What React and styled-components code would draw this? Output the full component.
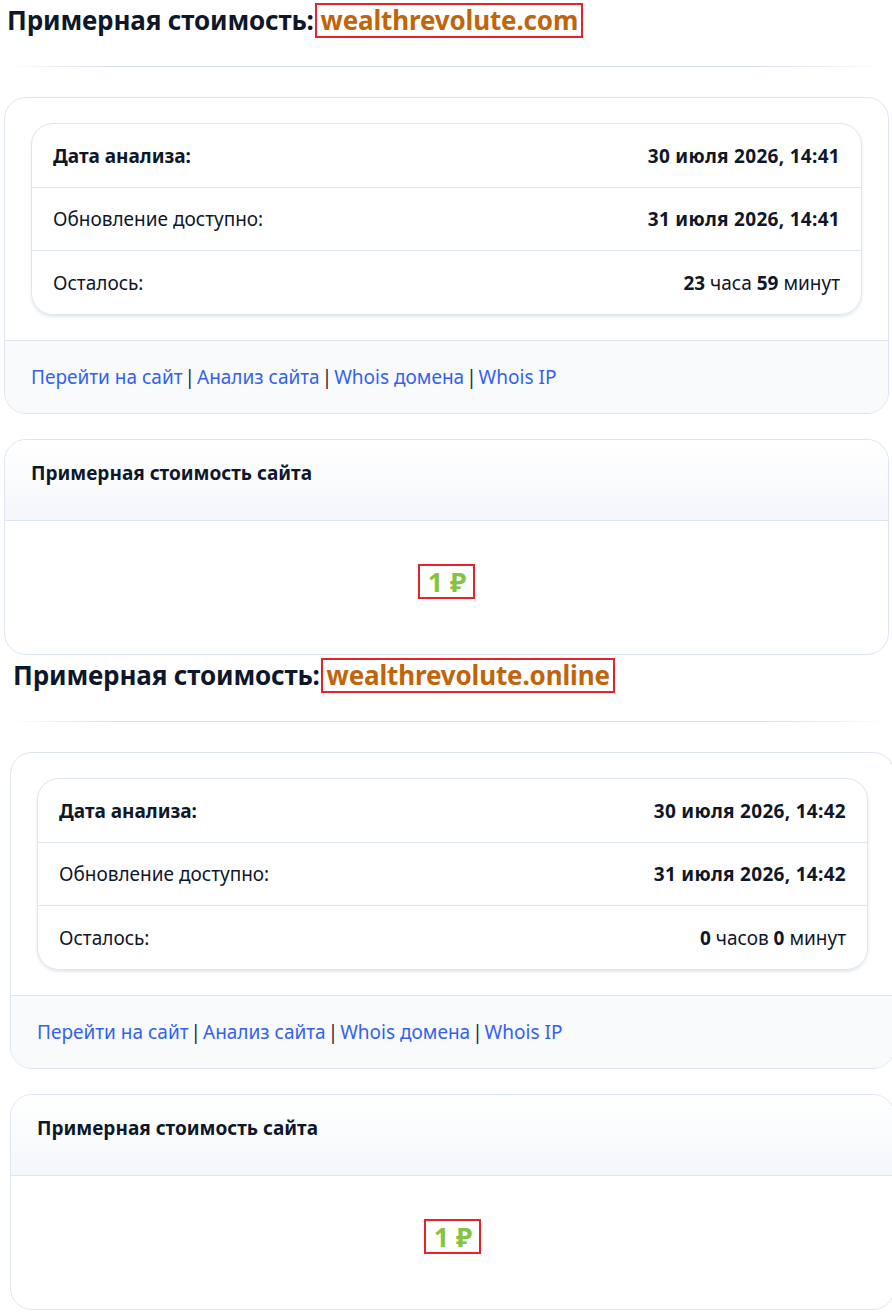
import React from "react";
import styled, { createGlobalStyle } from "styled-components";

const GlobalStyle = createGlobalStyle`
  html, body { margin: 0; padding: 0; background: #ffffff; overflow-x: hidden; }
  body { font-family: "Noto Sans", "Open Sans", Arial, sans-serif; color: #0f172a; }
  * { box-sizing: border-box; }
`;

const Page = styled.div`
  width: 892px;
  overflow: hidden;
`;

const Report = styled.section`
  width: 885px;
  margin-left: ${(p) => p.$shift}px;
  padding-top: 3px;
`;

const Heading = styled.h1`
  margin: 0 0 0 3px;
  font-size: 26px;
  font-weight: 700;
  line-height: 35px;
  letter-spacing: -0.15px;
  color: #0f172a;
  display: flex;
  align-items: center;
  gap: 1px;
  white-space: nowrap;
`;

const Domain = styled.span`
  display: inline-block;
  border: 2px solid #e3242b;
  padding: 0 3px 0 4px;
  line-height: 31px;
  color: #c0650b;
`;

const Rule = styled.hr`
  margin: 28px 0 30px;
  border: 0;
  height: 1px;
  background: linear-gradient(90deg, rgba(219,227,239,0), #d6deea 12%, #d6deea 85%, rgba(219,227,239,0));
`;

const Card = styled.div`
  border: 1px solid #dce5f1;
  border-radius: 22px;
  background: #ffffff;
  overflow: hidden;
  margin-bottom: ${(p) => p.$mb || 0}px;
`;

const CardBody = styled.div`
  padding: 25px 26px 25px 26px;
`;

const InfoTable = styled.div`
  border: 1px solid #dce5f1;
  border-radius: 22px;
  box-shadow: 0 2px 3px rgba(148, 163, 184, 0.25);
  overflow: hidden;
`;

const Row = styled.div`
  display: flex;
  justify-content: space-between;
  align-items: center;
  height: ${(p) => p.$h}px;
  padding: 0 21px;
  font-size: 19px;
  color: #0f172a;
  border-top: ${(p) => (p.$first ? "0" : "1px solid #dce5f1")};
`;

const Label = styled.span`
  font-weight: ${(p) => (p.$bold ? 700 : 400)};
`;

const Value = styled.span`
  font-weight: 700;
  letter-spacing: 0.3px;
`;

const Num = styled.b`
  font-weight: 700;
`;

const Footer = styled.div`
  border-top: 1px solid #dce5f1;
  background: #f8fafc;
  height: 73px;
  padding: 0 26px;
  display: flex;
  align-items: center;
  font-size: 19px;
  color: #1e293b;
`;

const Link = styled.a`
  color: #3361f0;
  text-decoration: none;
`;

const Sep = styled.span`
  margin: 0 2px;
  color: #1e293b;
`;

const CardHeader = styled.div`
  height: 81px;
  padding: 0 26px 14px;
  display: flex;
  align-items: center;
  font-size: 19px;
  font-weight: 700;
  color: #0f172a;
  background: linear-gradient(180deg, #ffffff 0%, #f4f7fb 100%);
  border-bottom: 1px solid #dce5f1;
`;

const PriceArea = styled.div`
  height: 133px;
  display: flex;
  justify-content: center;
  padding-top: 43px;
`;

const Price = styled.span`
  display: inline-block;
  align-self: flex-start;
  border: 2px solid #e3242b;
  padding: 0 7px 0 8px;
  line-height: 31px;
  font-size: 27px;
  font-weight: 700;
  color: #86c440;
`;

const links = ["Перейти на сайт", "Анализ сайта", "Whois домена", "Whois IP"];

function Estimate({ shift, domain, analysed, available, hours, hoursWord, minutes }) {
  return (
    <Report $shift={shift}>
      <Heading>
        Примерная стоимость: <Domain>{domain}</Domain>
      </Heading>
      <Rule />
      <Card $mb={25}>
        <CardBody>
          <InfoTable>
            <Row $first $h={63}>
              <Label $bold>Дата анализа:</Label>
              <Value>{analysed}</Value>
            </Row>
            <Row $h={63}>
              <Label>Обновление доступно:</Label>
              <Value>{available}</Value>
            </Row>
            <Row $h={64}>
              <Label>Осталось:</Label>
              <span>
                <Num>{hours}</Num> {hoursWord} <Num>{minutes}</Num> минут
              </span>
            </Row>
          </InfoTable>
        </CardBody>
        <Footer>
          {links.map((l, i) => (
            <React.Fragment key={l}>
              {i > 0 && <Sep>|</Sep>}
              <Link href="#">{l}</Link>
            </React.Fragment>
          ))}
        </Footer>
      </Card>
      <Card>
        <CardHeader>Примерная стоимость сайта</CardHeader>
        <PriceArea>
          <Price>1 ₽</Price>
        </PriceArea>
      </Card>
    </Report>
  );
}

export default function App() {
  return (
    <Page>
      <GlobalStyle />
      <Estimate
        shift={4}
        domain="wealthrevolute.com"
        analysed="30 июля 2026, 14:41"
        available="31 июля 2026, 14:41"
        hours="23"
        hoursWord="часа"
        minutes="59"
      />
      <Estimate
        shift={10}
        domain="wealthrevolute.online"
        analysed="30 июля 2026, 14:42"
        available="31 июля 2026, 14:42"
        hours="0"
        hoursWord="часов"
        minutes="0"
      />
    </Page>
  );
}
